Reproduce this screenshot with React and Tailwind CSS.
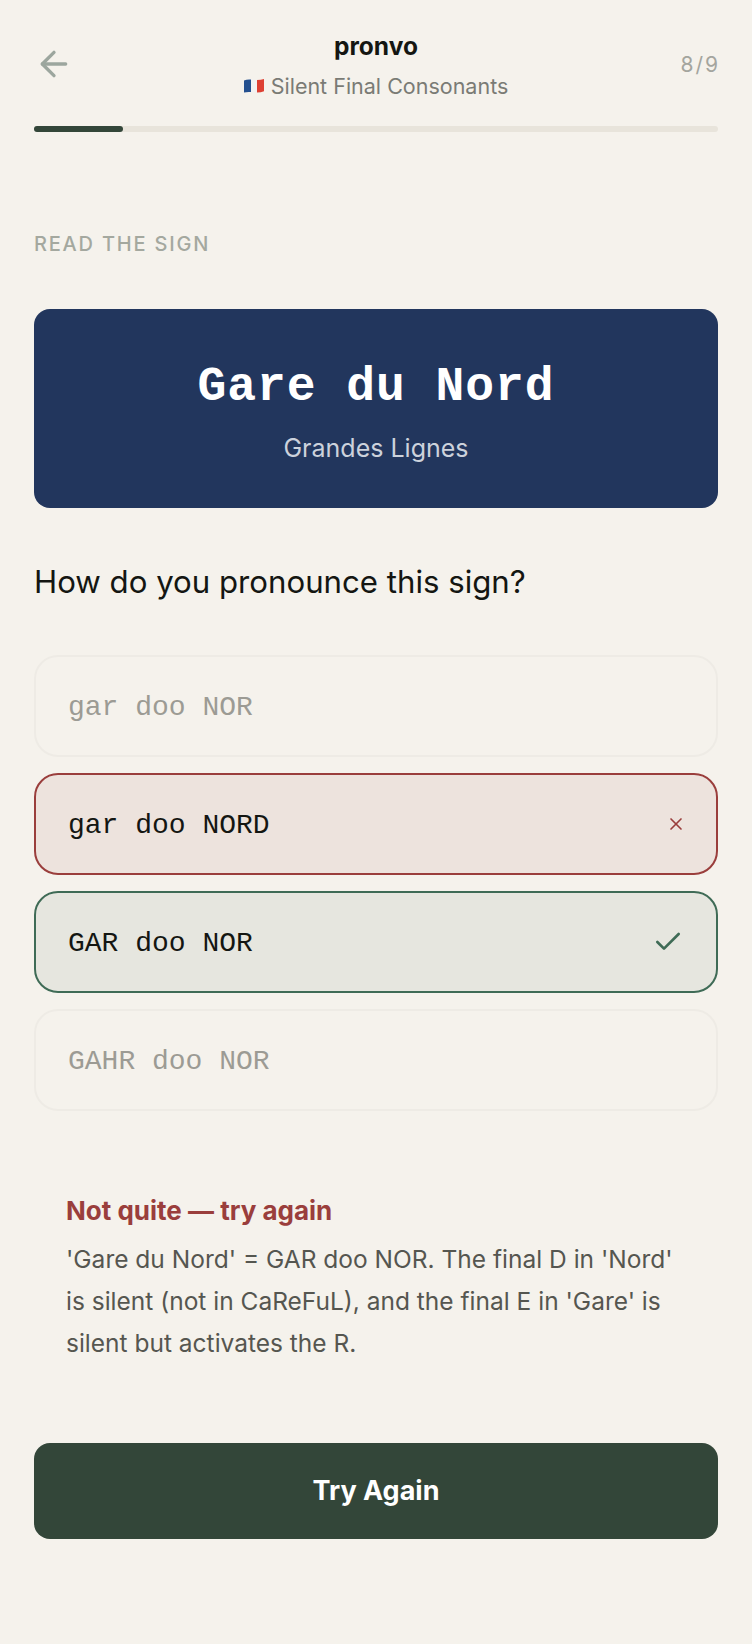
import React from "react";
import { ArrowLeft, Check, X } from "lucide-react";

const SANS = "font-['Inter',sans-serif]";
const MONO = "font-['Liberation_Mono',monospace]";

const options = [
  { text: "gar doo NOR", state: "idle" },
  { text: "gar doo NORD", state: "wrong" },
  { text: "GAR doo NOR", state: "right" },
  { text: "GAHR doo NOR", state: "idle" },
];

// waved little tricolour, the emoji font isn't available here
const FlagFr = () => (
  <svg width="20" height="16" viewBox="0 0 20 16">
    <path d="M0 2.5 Q3 1.2 7 1.6 V14 Q3 13.6 0 14.6 Z" fill="#24508f" />
    <path d="M7 1.6 Q10 2 13 2 V14.6 Q10 14.6 7 14 Z" fill="#f2f2f2" />
    <path d="M13 2 Q17 2 20 1 V13.2 Q17 14.4 13 14.6 Z" fill="#de4033" />
  </svg>
);

const Option = ({ text, state }) => {
  const box =
    state === "wrong"
      ? "border-[#9a3e3c] bg-[#ede3dd] text-[#141612]"
      : state === "right"
        ? "border-[#3f6b56] bg-[#e6e6df] text-[#141612]"
        : "border-[#eeebe5] text-[#9c9b94]";

  return (
    <div className={`flex h-[102px] items-center justify-between rounded-[24px] border-2 pl-[32px] pr-[34px] ${box}`}>
      <span className={`${MONO} pt-[3px] text-[28px]`}>{text}</span>
      {state === "wrong" && <X size={20} strokeWidth={2} className="mr-[-4px] text-[#9a3e3c]" />}
      {state === "right" && <Check size={32} strokeWidth={2} className="mr-[-2px] text-[#3f6b56]" />}
    </div>
  );
};

export default function App() {
  return (
    <div className={`${SANS} h-[1644px] bg-[#f5f2ec] px-[34px] pt-[30px]`}>
      <div className="grid grid-cols-[60px_1fr_60px] items-center">
        <ArrowLeft size={40} strokeWidth={2} className="mb-[4px] text-[#9ca69e]" />
        <div className="flex flex-col items-center">
          <span className="text-[24.5px] font-bold leading-[32px] text-[#141612]">pronvo</span>
          <div className="mt-[9px] flex items-center gap-[7px] text-[21.5px] leading-[30px] text-[#7a7b75]">
            <FlagFr />
            <span>Silent Final Consonants</span>
          </div>
        </div>
        <span className="mr-[-2px] pb-[2px] text-right text-[21px] tracking-[2px] text-[#a4a59e]">8/9</span>
      </div>

      <div className="mt-[25px] h-[6px] rounded-full bg-[#e8e4db]">
        <div className="h-full w-[89px] rounded-full bg-[#334639]" />
      </div>

      <div className="mt-[98px] text-[20px] font-medium leading-[28px] tracking-[1.8px] text-[#a4a89f]">READ THE SIGN</div>

      <div className="mt-[51px] flex h-[199px] flex-col items-center justify-center rounded-[16px] bg-[#22365d] pt-[5px]">
        <div className={`${MONO} text-[48px] font-bold leading-[56px] tracking-[0.96px] text-white`}>Gare du Nord</div>
        <div className="mt-[17px] text-[25px] leading-[32px] text-[#ccd2dc]">Grandes Lignes</div>
      </div>

      <div className="mt-[52px] text-[31.2px] leading-[44px] text-[#141612]">How do you pronounce this sign?</div>

      <div className="mt-[51px] flex flex-col gap-[16px]">
        {options.map((o) => (
          <Option key={o.text} text={o.text} state={o.state} />
        ))}
      </div>

      <div className="mt-[82px] px-[32px]">
        <div className="text-[26px] font-bold leading-[36px] text-[#9a3e3c]">Not quite — try again</div>
        <p className="mt-[9px] text-[24.5px] leading-[42px] text-[#555650]">
          'Gare du Nord' = GAR doo NOR. The final D in 'Nord' is silent (not in CaReFuL), and the final E in 'Gare' is
          silent but activates the R.
        </p>
      </div>

      <div className="mt-[79px] flex h-[96px] items-center justify-center rounded-[16px] bg-[#334639] text-[27px] font-bold text-white">
        Try Again
      </div>
    </div>
  );
}
